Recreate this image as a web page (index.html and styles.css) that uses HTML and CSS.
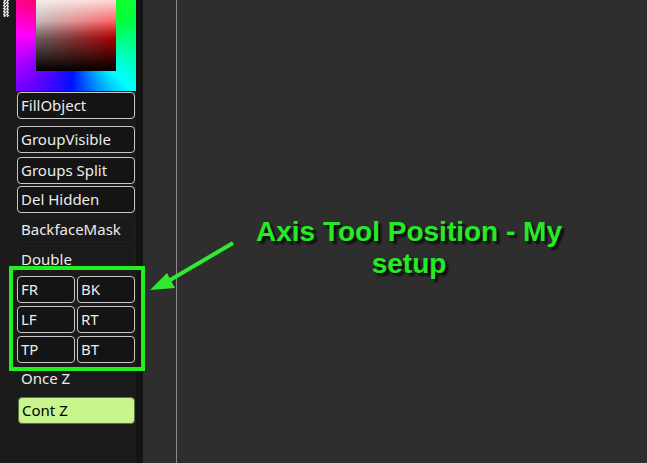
FILE: index.html
```html
<!DOCTYPE HTML>
<html>
<head>
<meta http-equiv="Content-Type" content="text/html; charset=utf-8" />
<title>Axis Tool Position</title>
<link rel="stylesheet" href="styles.css">
</head>
<body>
	<div class="app">
		<div class="side">
			<div class="top">
				<div class="alpha"></div>
				<div class="picker">
					<div class="sv"></div>
				</div>
			</div>
			<div class="btn b1">FillObject</div>
			<div class="btn b2">GroupVisible</div>
			<div class="btn b3">Groups Split</div>
			<div class="btn b4">Del Hidden</div>
			<div class="btn flat b5">BackfaceMask</div>
			<div class="btn flat b6">Double</div>
			<div class="axis">
				<div class="btn">FR</div>
				<div class="btn">BK</div>
				<div class="btn">LF</div>
				<div class="btn">RT</div>
				<div class="btn">TP</div>
				<div class="btn">BT</div>
			</div>
			<div class="btn flat once">Once Z</div>
			<div class="btn on">Cont Z</div>
		</div>
		<div class="gutter"></div>
		<div class="view">
			<div class="guide"></div>
			<!-- note over the canvas -->
			<div class="note">Axis Tool Position - My<br>setup</div>
			<svg class="arrow" width="100" height="60" viewBox="0 0 100 60">
				<line x1="88" y1="3" x2="20" y2="43" stroke="#2fea2f" stroke-width="4" />
				<polygon points="5,50 22,33 30,48" fill="#2fea2f" />
			</svg>
		</div>
	</div>
</body>
</html>
```

FILE: styles.css
```css
* {
	margin: 0;
	padding: 0;
	box-sizing: border-box;
}

body {
	width: 647px;
	height: 463px;
	overflow: hidden;
	background: #2e2e2e;
	font-family: "Noto Sans", "DejaVu Sans", sans-serif;
}

.app {
	display: flex;
	height: 463px;
}

/**** 左侧面板 *****/
.side {
	width: 136px;
	background: #1b1b1b;
	padding-left: 17px;
	display: flex;
	flex-direction: column;
}

.top {
	position: relative;
	height: 91px;
	margin-left: -1px;
}

.alpha {
	position: absolute;
	left: -13px;
	top: 0;
	width: 6px;
	height: 17px;
	background: repeating-conic-gradient(#ddd 0 25%, #555 0 50%) 0 0 / 3px 3px;
}

.picker {
	width: 120px;
	height: 91px;
	padding: 0 20px;
	background: conic-gradient(from 0deg at 60px 35px, #40ff00 0deg, #00ff40 75deg, #00ffb0 110deg, #00ffff 135deg, #0070ff 165deg, #0010ff 185deg, #7000ff 225deg, #ff00ff 270deg, #ff0080 305deg, #ff0030 330deg, #60ff00 360deg);
}

.sv {
	width: 80px;
	height: 71px;
	background:
		linear-gradient(to bottom, rgba(0, 0, 0, 0) 30%, #000 100%),
		linear-gradient(to bottom, rgba(255, 255, 255, .85), rgba(255, 255, 255, 0) 55%),
		linear-gradient(to right, #a09090, #ff0000);
}

.btn {
	width: 118px;
	height: 27px;
	border: 1px solid #c8c8c8;
	border-radius: 4px;
	background: #141414;
	color: #ececec;
	font-size: 15px;
	line-height: 25px;
	padding-left: 3px;
	white-space: nowrap;
}

.btn.flat {
	border-color: #202020;
	background: #1a1a1a;
}

.b1 { margin-top: 1px; }
.b2 { margin-top: 7px; }
.b3 { margin-top: 4px; }
.b4 { margin-top: 2px; }
.b5 { margin-top: 3px; }
.b6 { margin-top: 3px; height: 20px; }

.axis {
	position: relative;
	z-index: 2;
	width: 136px;
	margin-left: -8px;
	border: 4px solid #22ee22;
	padding: 6px 7px 4px 4px;
	display: grid;
	grid-template-columns: 58px 58px;
	column-gap: 2px;
	row-gap: 3px;
}

.axis .btn {
	width: 58px;
}

.btn.once {
	height: 26px;
	line-height: 12px;
	border-color: #1b1b1b;
	background: #1b1b1b;
}

.btn.on {
	margin-left: 1px;
	width: 117px;
	height: 27px;
	background: #c8f68c;
	border-color: #5c7040;
	color: #000;
}

.gutter {
	width: 7px;
	background: #141414;
}

/**** 视图 *****/
.view {
	flex: 1;
	position: relative;
	background: #2e2e2e;
}

.guide {
	margin-left: 33px;
	width: 1px;
	height: 100%;
	background: #8a8a8a;
}

.note {
	position: absolute;
	left: 111px;
	top: 216px;
	width: 310px;
	text-align: center;
	font-family: "Liberation Sans", Arial, sans-serif;
	font-weight: bold;
	font-size: 28px;
	line-height: 32px;
	color: #26ea26;
	text-shadow: 3px 3px 2px #0e0e0e;
}

.arrow {
	position: absolute;
	left: 2px;
	top: 240px;
}
```
